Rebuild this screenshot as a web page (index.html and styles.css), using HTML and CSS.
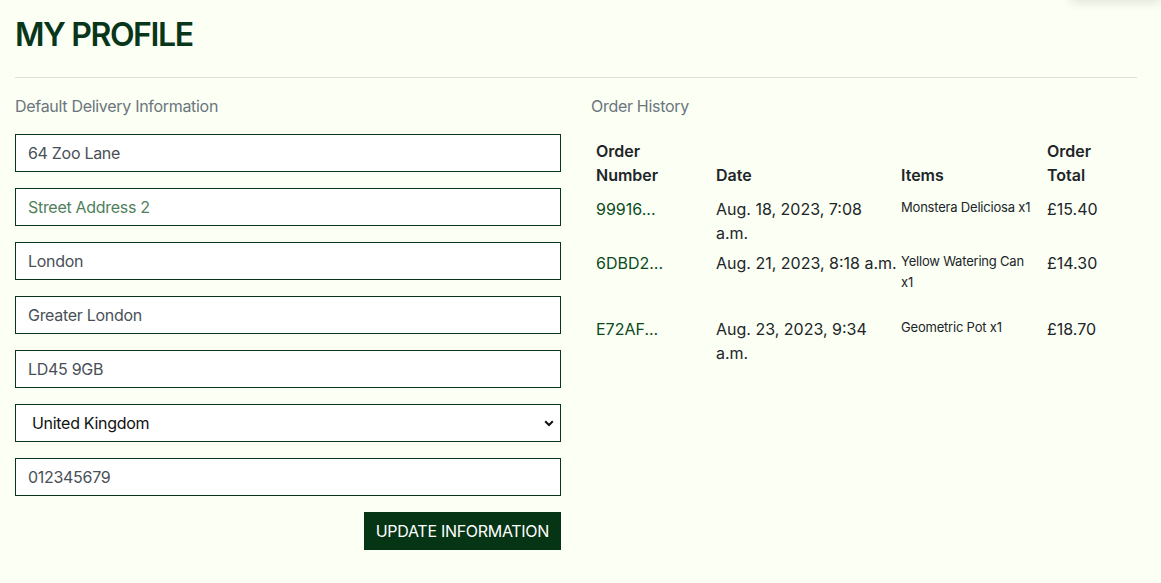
FILE: index.html
```html
<!DOCTYPE html>
<html lang="en">
<head>
<meta charset="utf-8">
<title>My Profile</title>
<link rel="stylesheet" href="styles.css">
</head>
<body>
<div class="corner-shadow"></div>
<main class="page">
  <h1 class="page-title">MY PROFILE</h1>
  <hr class="divider">
  <div class="columns">
    <section class="col">
      <p class="section-label">Default Delivery Information</p>
      <form class="profile-form">
        <input class="field" type="text" value="64 Zoo Lane">
        <input class="field" type="text" placeholder="Street Address 2">
        <input class="field" type="text" value="London">
        <input class="field" type="text" value="Greater London">
        <input class="field" type="text" value="LD45 9GB">
        <select class="field select">
          <option>United Kingdom</option>
        </select>
        <input class="field" type="text" value="012345679">
        <div class="actions">
          <button type="button" class="btn">UPDATE INFORMATION</button>
        </div>
      </form>
    </section>
    <section class="col">
      <p class="section-label">Order History</p>
      <table class="orders">
        <colgroup>
          <col class="c-num"><col class="c-date"><col class="c-items"><col class="c-total">
        </colgroup>
        <thead>
          <tr><th>Order Number</th><th>Date</th><th>Items</th><th>Order Total</th></tr>
        </thead>
        <tbody>
          <tr>
            <td><a class="order-link" href="#">99916...</a></td>
            <td>Aug. 18, 2023, 7:08 a.m.</td>
            <td><p class="item">Monstera Deliciosa x1</p></td>
            <td>£15.40</td>
          </tr>
          <tr>
            <td><a class="order-link" href="#">6DBD2...</a></td>
            <td><span class="nowrap">Aug. 21, 2023, 8:18 a.m.</span></td>
            <td><p class="item">Yellow Watering Can x1</p></td>
            <td>£14.30</td>
          </tr>
          <tr>
            <td><a class="order-link" href="#">E72AF...</a></td>
            <td>Aug. 23, 2023, 9:34 a.m.</td>
            <td><p class="item">Geometric Pot x1</p></td>
            <td>£18.70</td>
          </tr>
        </tbody>
      </table>
    </section>
  </div>
</main>
</body>
</html>
```
FILE: styles.css
```css
* { box-sizing: border-box; }
html, body {
  margin: 0;
  background: #fbfff4;
}
body {
  font-family: Inter, "Noto Sans", "Liberation Sans", sans-serif;
  font-size: 16px;
  line-height: 1.5;
  color: #212529;
  letter-spacing: -0.3px;
  overflow: hidden;
}
.corner-shadow {
  position: absolute;
  top: -40px;
  right: 0;
  width: 90px;
  height: 40px;
  background: #fbfff4;
  box-shadow: 0 2px 10px rgba(0,0,0,0.12);
}
.page {
  width: 1137px;
  padding: 16px 0 0 15px;
}
.page-title {
  margin: 0;
  font-size: 32px;
  line-height: 38px;
  font-weight: 600;
  color: #08361a;
  letter-spacing: -1.4px;
}
.divider {
  margin: 23px 0 16px;
  border: 0;
  border-top: 1px solid #dfe1de;
  height: 0;
}
.columns {
  display: grid;
  grid-template-columns: 546px 546px;
  column-gap: 30px;
}
.section-label {
  margin: 0 0 16px;
  color: #6c757d;
  font-size: 16px;
  line-height: 24px;
}
.profile-form {
  display: flex;
  flex-direction: column;
  gap: 16px;
}
.field {
  display: block;
  width: 100%;
  height: 38px;
  padding: 6px 12px;
  font-family: inherit;
  font-size: 16px;
  line-height: 24px;
  letter-spacing: -0.3px;
  color: #495057;
  background: #fff;
  border: 1px solid #08361a;
  border-radius: 0;
  outline: none;
}
.field::placeholder {
  color: #4f7f5a;
  opacity: 1;
}
.select {
  appearance: none;
  -webkit-appearance: none;
  padding-left: 16px;
  color: #111;
  background-image: url("data:image/svg+xml,%3Csvg xmlns='http://www.w3.org/2000/svg' width='10' height='7' viewBox='0 0 10 7'%3E%3Cpath d='M1.2 1.3 L5 5 L8.8 1.3' fill='none' stroke='%23111' stroke-width='2'/%3E%3C/svg%3E");
  background-repeat: no-repeat;
  background-position: right 6px center;
  background-size: 10px 7px;
}
.actions {
  display: flex;
  justify-content: flex-end;
}
.btn {
  height: 38px;
  padding: 0 12px;
  font-family: inherit;
  font-size: 16px;
  line-height: 24px;
  letter-spacing: -0.3px;
  color: #fff;
  background: #053515;
  border: 0;
  border-radius: 0;
  cursor: pointer;
}
.orders {
  width: 546px;
  table-layout: fixed;
  border-collapse: collapse;
  letter-spacing: 0;
}
.c-num { width: 120px; }
.c-date { width: 185px; }
.c-items { width: 146px; }
.c-total { width: 95px; }
.orders th {
  text-align: left;
  vertical-align: bottom;
  font-weight: 600;
  padding: 5px 5px 7px;
}
.orders td {
  vertical-align: top;
  padding: 3px 5px;
}
.order-link {
  color: #0b4a1d;
  text-decoration: none;
}
.nowrap { white-space: nowrap; }
.item {
  margin: 0 0 19px;
  font-size: 13px;
  line-height: 20.5px;
  letter-spacing: -0.2px;
  color: #212529;
}
```
